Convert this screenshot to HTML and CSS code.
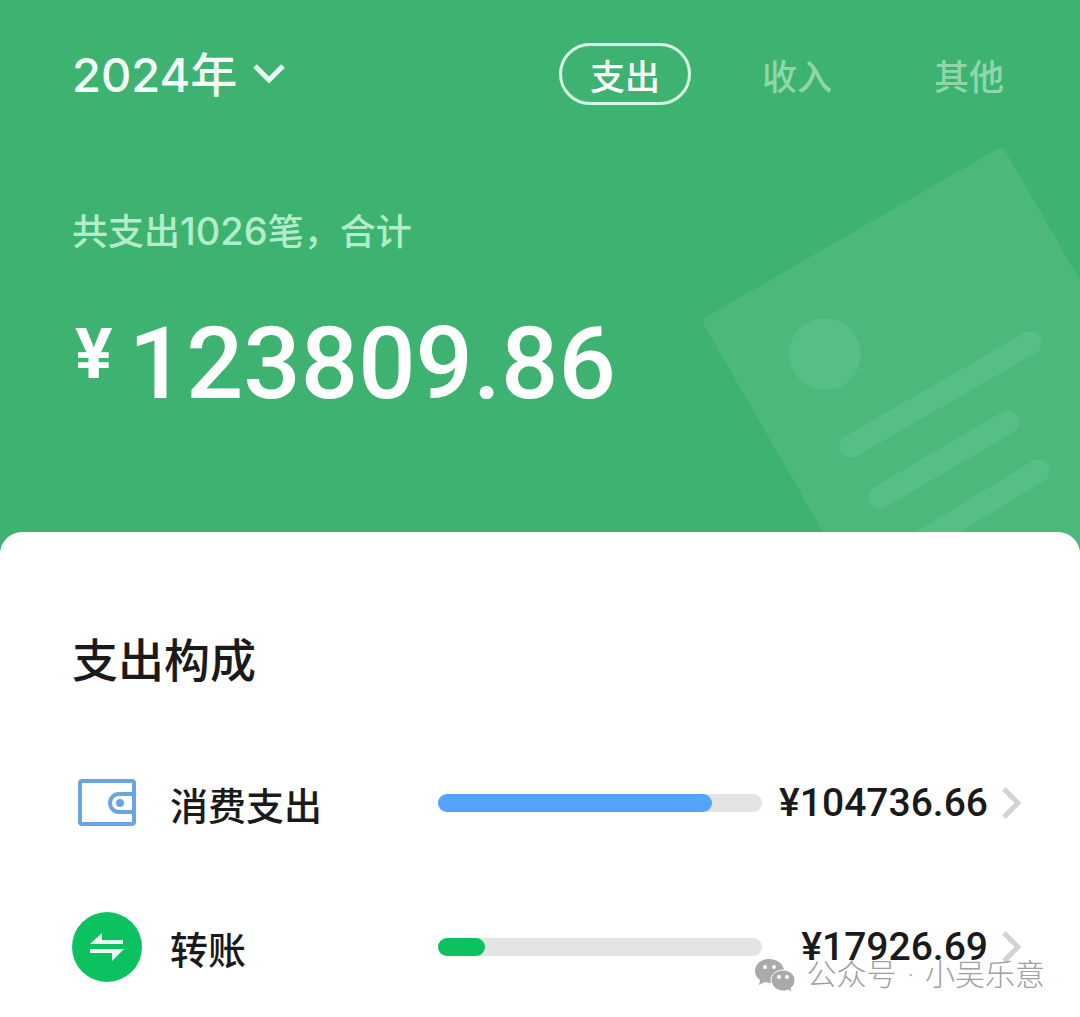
FILE: index.html
```html
<!DOCTYPE html>
<html lang="zh-CN">
<head>
    <meta charset="UTF-8">
    <meta name="viewport" content="width=device-width, initial-scale=1.0">
    <title>年度账单</title>
    <link rel="stylesheet" href="styles.css">
</head>
<body>
    <header class="hero">
        <svg class="hero-art" viewBox="0 0 380 412" aria-hidden="true">
            <rect width="348" height="480" rx="6" fill="#4cb87c" transform="translate(1 180) rotate(-30)"/>
            <circle cx="125" cy="214" r="36" fill="#57be86"/>
            <path d="M151 306L330 203M180 357L308 282M205 412L338 331" stroke="#57be86" stroke-width="23" stroke-linecap="round"/>
        </svg>

        <nav class="top-bar">
            <div class="year">
                <select class="year-select" aria-label="年份">
                    <option>2024年</option>
                </select>
                <svg class="year-arrow" viewBox="0 0 34 22" aria-hidden="true">
                    <path d="M3 3L17 17L31 3" fill="none" stroke="#eafff3" stroke-width="5"/>
                </svg>
            </div>
            <div class="tabs">
                <button class="tab active" type="button">支出</button>
                <button class="tab" type="button">收入</button>
                <button class="tab" type="button">其他</button>
            </div>
        </nav>

        <p class="summary">共支出<span class="count">1026</span>笔，合计</p>
        <p class="total"><span class="currency">¥</span>123809.86</p>
    </header>

    <main class="sheet">
        <h2>支出构成</h2>

        <a class="row" href="#consume">
            <svg class="row-icon" viewBox="0 0 70 70" aria-hidden="true">
                <g fill="none" stroke="#68a5e2" stroke-width="4">
                    <rect x="8" y="13" width="54" height="43" rx="2"/>
                    <path d="M62 26H47a9 9 0 0 0 0 18h15"/>
                </g>
                <circle cx="48" cy="35" r="4" fill="#68a5e2"/>
            </svg>
            <span class="row-label">消费支出</span>
            <span class="track"><span class="fill blue" style="width: 84.6%"></span></span>
            <span class="amount">¥104736.66</span>
            <svg class="row-arrow" viewBox="0 0 20 34" aria-hidden="true">
                <path d="M2 3L16 17L2 31" fill="none" stroke="#d2d2d2" stroke-width="5"/>
            </svg>
        </a>

        <a class="row" href="#transfer">
            <svg class="row-icon" viewBox="0 0 70 70" aria-hidden="true">
                <circle cx="35" cy="35" r="35" fill="#0bc160"/>
                <path d="M18 32L30 21V28H51V32ZM52 37L40 49V41H18V37Z" fill="#e9fff2"/>
            </svg>
            <span class="row-label">转账</span>
            <span class="track"><span class="fill green" style="width: 14.5%"></span></span>
            <span class="amount">¥17926.69</span>
            <svg class="row-arrow" viewBox="0 0 20 34" aria-hidden="true">
                <path d="M2 3L16 17L2 31" fill="none" stroke="#d2d2d2" stroke-width="5"/>
            </svg>
        </a>

        <div class="watermark">
            <svg class="watermark-icon" viewBox="0 0 42 34" aria-hidden="true">
                <path d="M15 1C7 1 1 6 1 13c0 4 2 7 5 9l-1 5 6-3c1 0 3 1 5 1 7 0 14-5 14-12S23 1 15 1Z" fill="#aaa"/>
                <path d="M29 12c-7 0-12 5-12 10s5 11 12 11c2 0 3 0 5-1l4 2-1-4c3-2 4-5 4-8 0-5-5-10-12-10Z" fill="#aaa" stroke="#fff" stroke-width="1"/>
                <g fill="#fff">
                    <circle cx="11" cy="9" r="2"/>
                    <circle cx="20" cy="9" r="2"/>
                    <circle cx="25" cy="19" r="2"/>
                    <circle cx="33" cy="19" r="2"/>
                </g>
            </svg>
            <span>公众号 · 小吴乐意</span>
        </div>
    </main>
</body>
</html>
```
FILE: styles.css
```css
* {
    margin: 0;
    padding: 0;
    box-sizing: border-box;
}

body {
    background-color: #fff;
    color: #1a1a1a;
    font-family: Inter, "Noto Sans CJK SC", sans-serif;
    font-weight: 500;
}

/* Green header */
.hero {
    position: relative;
    overflow: hidden;
    padding: 40px 45px 128px 72px;
    background-color: #3eb371;
    color: #fff;
}

.hero-art {
    position: absolute;
    right: 0;
    bottom: 0;
    width: 380px;
    height: 412px;
}

.top-bar {
    position: relative;
    display: flex;
    justify-content: space-between;
    align-items: center;
    height: 68px;
}

.year {
    display: flex;
    align-items: center;
    gap: 14px;
}

.year-select {
    appearance: none;
    border: none;
    background: none;
    color: #f2fff7;
    font: inherit;
    font-size: 47px;
}

.year-arrow {
    width: 34px;
    height: 22px;
}

.tabs {
    display: flex;
    gap: 40px;
}

.tab {
    width: 132px;
    height: 62px;
    border: 3px solid transparent;
    border-radius: 31px;
    background: none;
    color: #8fd6ab;
    font: inherit;
    font-size: 35px;
}

.tab.active {
    border-color: #d5fbe4;
    color: #fff;
}

.summary {
    position: relative;
    margin-top: 97px;
    color: #b2ecc8;
    font-size: 36px;
    line-height: 52px;
}

.count {
    font-size: 38px;
}

.total {
    position: relative;
    display: flex;
    align-items: flex-start;
    gap: 16px;
    margin-top: 46px;
    padding-left: 3px;
    font-family: Roboto, sans-serif;
    font-size: 101px;
    line-height: 120px;
}

.currency {
    font-size: 70px;
    font-weight: 700;
    line-height: 100px;
}

/* White sheet */
.sheet {
    position: relative;
    margin-top: -20px;
    padding: 94px 58px 35px 72px;
    border-radius: 22px 22px 0 0;
    background-color: #fff;
}

h2 {
    font-size: 46px;
    font-weight: 500;
    line-height: 68px;
}

.row {
    display: flex;
    align-items: center;
    margin-top: 74px;
    color: inherit;
    text-decoration: none;
}

.row-icon {
    width: 70px;
    height: 70px;
    margin-right: 28px;
}

.row-label {
    width: 268px;
    font-size: 38px;
}

.track {
    flex: 1;
    height: 18px;
    border-radius: 9px;
    background-color: #e4e4e4;
}

.fill {
    display: block;
    height: 100%;
    border-radius: 9px;
}

.blue {
    background-color: #55a3fb;
}

.green {
    background-color: #0bc160;
}

.amount {
    width: 226px;
    font-family: Roboto, sans-serif;
    font-size: 39px;
    text-align: right;
}

.row-arrow {
    width: 20px;
    height: 34px;
    margin-left: 14px;
}

.watermark {
    position: absolute;
    right: 35px;
    bottom: 20px;
    display: flex;
    align-items: center;
    gap: 10px;
    color: #a0a0a0;
    font-family: "DejaVu Sans", "Noto Sans CJK SC", sans-serif;
    font-size: 30px;
    font-weight: 300;
    line-height: 44px;
}

.watermark-icon {
    width: 42px;
    height: 34px;
}
```
